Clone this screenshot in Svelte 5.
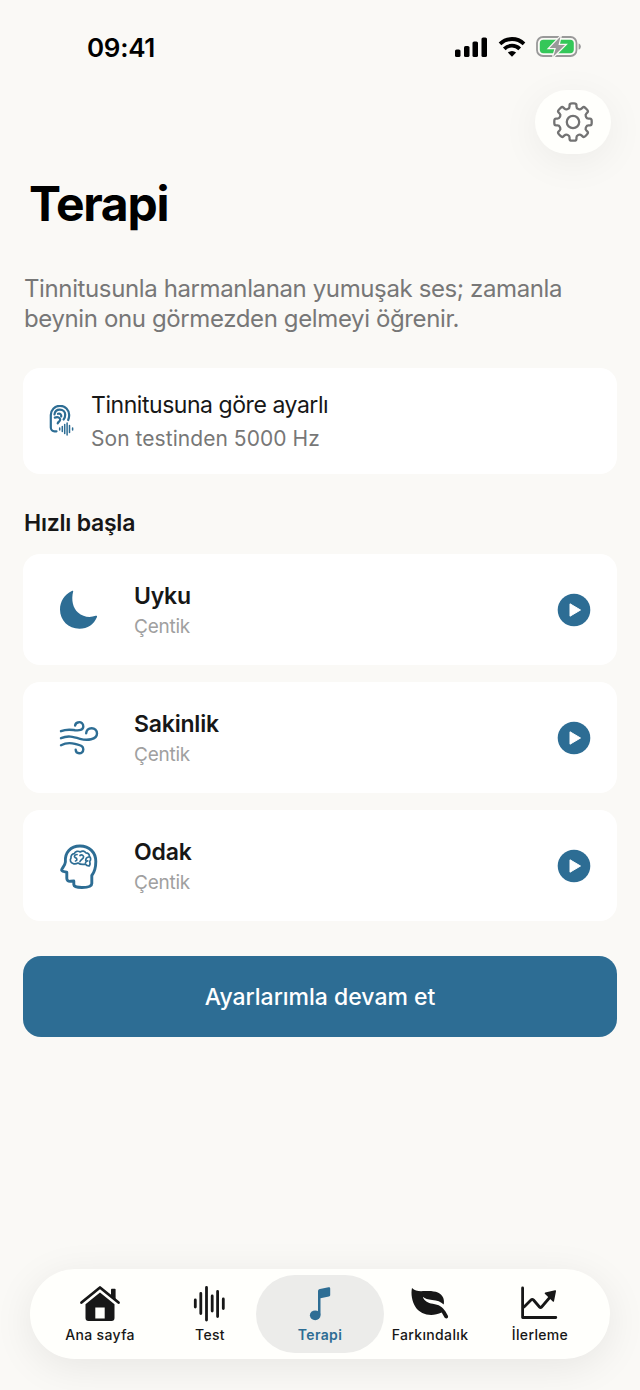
<script>
    const presets = [
        { id: 'sleep', title: 'Uyku', mode: 'Çentik' },
        { id: 'calm', title: 'Sakinlik', mode: 'Çentik' },
        { id: 'focus', title: 'Odak', mode: 'Çentik' }
    ];

    const tabs = [
        { id: 'home', label: 'Ana sayfa' },
        { id: 'test', label: 'Test' },
        { id: 'therapy', label: 'Terapi' },
        { id: 'mindfulness', label: 'Farkındalık' },
        { id: 'progress', label: 'İlerleme' }
    ];

    let activeTab = 'therapy';
    let playing = null;

    // Outline of the settings gear: eight teeth with softened corners
    function gearPath(cx, cy, outer, inner) {
        const points = [];
        for (let i = 0; i < 8; i++) {
            const mid = (i * Math.PI) / 4 - Math.PI / 2;
            for (const [r, a] of [[inner, -0.25], [outer, -0.18], [outer, 0.18], [inner, 0.25]]) {
                points.push([cx + r * Math.cos(mid + a), cy + r * Math.sin(mid + a)]);
            }
        }
        const between = (p, q, t) => [p[0] + (q[0] - p[0]) * t, p[1] + (q[1] - p[1]) * t];
        const text = (p) => `${p[0].toFixed(2)} ${p[1].toFixed(2)}`;
        return points
            .map((p, i) => {
                const prev = points[(i + points.length - 1) % points.length];
                const next = points[(i + 1) % points.length];
                const start = between(p, prev, 0.35);
                const end = between(p, next, 0.35);
                return `${i === 0 ? 'M' : 'L'}${text(start)}Q${text(p)} ${text(end)}`;
            })
            .join('') + 'Z';
    }
</script>

<div class="screen">
    <div class="status-bar">
        <span class="time">09:41</span>
        <div class="indicators">
            <svg width="34" height="22" viewBox="0 0 34 22">
                <rect x="1" y="13.5" width="5.5" height="7.5" rx="1.6" />
                <rect x="10" y="10" width="5.5" height="11" rx="1.6" />
                <rect x="18.5" y="5.5" width="5.5" height="15.5" rx="1.6" />
                <rect x="27.5" y="1.5" width="5.5" height="19.5" rx="1.6" />
            </svg>
            <svg class="wifi" width="28" height="22" viewBox="0 0 28 22">
                <path d="M2 7.8a17.4 17.4 0 0 1 24 0" />
                <path d="M6.3 12.8a11 11 0 0 1 15.4 0" />
                <path class="dot" d="M9.9 16.6a6 6 0 0 1 8.200 0L14 20.800Z" />
            </svg>
            <svg class="battery" width="46" height="24" viewBox="0 0 46 24">
                <rect class="shell" x="1" y="2" width="39.5" height="19" rx="6" />
                <rect class="level" x="3.8" y="4.8" width="34" height="13.4" rx="3.6" />
                <path class="cap" d="M42.600 8.400c3 1 3 5.200 0 6.200Z" />
                <path class="bolt" d="M24.500 1.500 13.500 13h6.400l-2.700 8.800L29 10h-6.500Z" />
            </svg>
        </div>
    </div>

    <div class="toolbar">
        <button class="settings-button" aria-label="Ayarlar">
            <svg width="44" height="44" viewBox="0 0 44 44">
                <path d={gearPath(22, 22, 19, 14.2)} />
                <circle cx="22" cy="22" r="6.2" />
            </svg>
        </button>
    </div>

    <main>
        <h1>Terapi</h1>
        <p class="intro">Tinnitusunla harmanlanan yumuşak ses; zamanla<br />beynin onu görmezden gelmeyi öğrenir.</p>

        <section class="card tuned">
            <svg width="28" height="32" viewBox="0 0 28 32">
                <path d="M8.500 26.300H6.500a3.700 3.700 0 0 1-3.700-3.700V10a9.200 9.200 0 0 1 18.400 0c0 2-.3 3.300-1 5" />
                <path d="M6.500 9.500c.3-3 2.500-4.800 5.300-4.800 3.200 0 5.400 2.200 5.400 5.100 0 1.900-.6 3.500-1.600 4.700" />
                <path d="M10 8.800c2.300-.6 3.600.8 3.200 2.700M6.800 12.600c3-.9 5.400-.2 5.400 1.900 0 2-1.900 2.100-2.500 3.900" />
                <path class="wave" d="M11.700 23v2M14.300 21.500v5M16.700 19.500v9M19.100 18v12M21.500 20.500v7M24.600 23v2" />
            </svg>
            <div>
                <div class="tuned-title">Tinnitusuna göre ayarlı</div>
                <div class="tuned-detail">Son testinden 5000 Hz</div>
            </div>
        </section>

        <h2>Hızlı başla</h2>

        <div class="presets">
            {#each presets as preset (preset.id)}
                <div class="card preset">
                    <div class="preset-icon">
                        {#if preset.id === 'sleep'}
                            <svg width="44" height="48" viewBox="0 0 44 48">
                                <path class="solid" d="M17.200 5.300C15 14.500 17 22 22 26.500c5 4.600 12 5.500 17.600 3.300 1.100-.3 1.700.3 1.400 1.100C38 38.200 31.500 42.700 23.500 42.700 12.300 42.700 4 34.300 4 23.500 4 15.300 8.500 8.500 15.800 5c1-.5 1.700-.4 1.400.3Z" />
                            </svg>
                        {:else if preset.id === 'calm'}
                            <svg width="44" height="48" viewBox="0 0 44 48">
                                <path d="M5 17.200c6-2.500 10-1.500 14-1 4 .4 8 .2 8.300-3.600.1-2.900-2.200-4.700-4.600-4.400-2 .2-3.300 1.500-3.600 3.300" />
                                <path d="M5 24.200c7-3 12-1.500 19 .6 7 2 17 1 17-5.300 0-3.300-2.400-5.300-5.300-5.300-3.500 0-5.400 2.300-5.500 5" />
                                <path d="M5 31.200c5-2.600 9.500-2.600 14-1.300 5 1.400 8.300 1.700 8.300 5.300 0 2.700-2 4.300-4.200 4.100-1.900-.1-3.300-1.500-3.400-3.600" />
                            </svg>
                        {:else}
                            <svg width="44" height="48" viewBox="0 0 44 48">
                                <path class="head" d="M35.800 33.500v8c0 2.800-4.800 4-9.800 4s-8-1-8.200-3V39l-3.300.3c-2.500.2-3.700-.8-3.700-3v-6.100c-2.500-.3-4.900-.9-5.200-2-.3-1.200 3.600-4.700 3.800-8.200C8.600 10.500 14.500 4 24 4s15.800 6.500 15.800 15.500c0 6-1.200 10.500-4 14Z" />
                                <path class="brain" d="M17 21.500c-2.600-.8-3.400-3.500-2-5.500-.4-2.500 1.100-4.300 3.300-4.400 1-2.400 4-3 5.900-1.600 2-1.500 4.600-1 5.600.8 2.300 0 3.800 1.700 3.600 3.700 1.500 1.300 1.700 3.500.3 4.900.6 1.500.4 3-.3 4.500-1.700.2-3-.4-3.800-1.700-3.200.6-5.700.2-7.500-1.200-1.900 1-3.700 1.200-5.100.5Z" />
                                <path class="brain" d="M21 12.500c-2.500 0-3.300 2-1.800 3.200 1.700.3 2.600 2.600.3 3.300M24 13.500c2-1.500 4.300.4 3.300 2.300-.7 1.400-2.500 2-3.300 3.700M32.500 15c-2 .4-2.700 1.700-2.800 3.200M29.500 20.800c.2-1.200 1-1.900 2.200-2" />
                            </svg>
                        {/if}
                    </div>
                    <div class="preset-text">
                        <div class="preset-title">{preset.title}</div>
                        <div class="preset-mode">{preset.mode}</div>
                    </div>
                    <button class="play-button" aria-label="Oynat" on:click={() => (playing = preset.id)}>
                        <svg width="34" height="34" viewBox="0 0 34 34">
                            <circle cx="17" cy="17" r="16.3" />
                            <path d="M13 10.800 23.500 17 13 23.200Z" />
                        </svg>
                    </button>
                </div>
            {/each}
        </div>

        <button class="continue-button">Ayarlarımla devam et</button>
    </main>

    <nav>
        {#each tabs as tab (tab.id)}
            <button class="tab" class:active={activeTab === tab.id} on:click={() => (activeTab = tab.id)}>
                <svg width="44" height="40" viewBox="0 0 44 40">
                    {#if tab.id === 'home'}
                        <path class="line" d="M3.500 19.500 22 4.500l18.500 15" />
                        <path d="M33 6.500q0-.8.800-.8h3q.8 0 .8.800v10L33 12.500Z" />
                        <path fill-rule="evenodd" d="M22 9.500 36.500 21.200V35a3 3 0 0 1-3 3h-23a3 3 0 0 1-3-3V21.200ZM17.300 24.500v11h9.400v-11Z" />
                    {:else if tab.id === 'test'}
                        <path class="line" d="M7.300 17v7M12.800 10.500v20M18.500 4.500v32.500M24.200 13v15M29.600 8.500v25M35.300 16v9.500" />
                    {:else if tab.id === 'therapy'}
                        <ellipse cx="17.200" cy="32.300" rx="5.300" ry="4.900" />
                        <path d="M20 31V8.500c0-1.500.7-2.200 2-2.500l8.500-1.700c1-.2 1.700.3 1.700 1.200V12c0 .8-.5 1.400-1.300 1.500l-8.400 1.700V32Z" />
                    {:else if tab.id === 'mindfulness'}
                        <path d="M4 5c3 3.500 8 3.300 13 3 9-.6 16 1 18.300 7 .8 2.200.8 4.300.4 6.600-3-3-6.500-4.100-11.500-4.600-4.200-.4-7.200-1.500-9.400-3.300 1.200 4 5 6.300 10 7 6 .8 9.800 3.200 12.700 7.800l2.400 4.300c1.100 2.500-2.300 3.700-3.500 1.500l-2.700-4.700C24 34 13 32.300 7.500 24 4 18.500 2.700 10.500 4 5Z" />
                    {:else}
                        <path class="line" d="M4.600 5v29.500h33.200M6 24l7-7c.9-.9 1.600-.9 2.500 0l6 7c.7.8 1.400.8 2.100 0L33 13" />
                        <path d="M26.800 10.800q-.5-.8.500-1.200L37 7.200q1.300-.2 1 1.100l-2 10q-.5 1-1.200.2Z" />
                    {/if}
                </svg>
                <span>{tab.label}</span>
            </button>
        {/each}
    </nav>
</div>

<style>
    :global(body) {
        background: #faf9f6;
    }

    .screen {
        --accent: #2d6d94;
        display: flex;
        flex-direction: column;
        box-sizing: border-box;
        height: 1390px;
        padding-bottom: 31px;
        overflow: hidden;
        background: #faf9f6;
        color: #171717;
        font-family: Inter, "Liberation Sans", sans-serif;
    }

    button {
        padding: 0;
        border: none;
        background: none;
        color: inherit;
        font: inherit;
        cursor: pointer;
    }

    svg {
        display: block;
        flex-shrink: 0;
    }

    .status-bar {
        display: flex;
        align-items: center;
        justify-content: space-between;
        height: 90px;
        box-sizing: border-box;
        padding: 4px 58px 0 87px;
    }

    .time {
        padding-top: 1px;
        font-size: 26px;
        font-weight: 600;
        letter-spacing: -0.3px;
        color: #000;
    }

    .indicators {
        display: flex;
        align-items: center;
        gap: 10px;
    }

    .wifi path {
        fill: none;
        stroke: #000;
        stroke-width: 3.8;
    }

    .wifi .dot {
        fill: #000;
        stroke: none;
    }

    .battery .shell {
        fill: none;
        stroke: #999;
        stroke-width: 1.8;
    }

    .battery .level {
        fill: #34c759;
    }

    .battery .cap {
        fill: #999;
    }

    .battery .bolt {
        fill: #999;
        stroke: #faf9f6;
        stroke-width: 2.4;
        paint-order: stroke;
    }

    .toolbar {
        display: flex;
        justify-content: flex-end;
        padding-right: 29px;
    }

    .settings-button {
        display: flex;
        align-items: center;
        justify-content: center;
        width: 76px;
        height: 64px;
        border-radius: 32px;
        background: #fffffc;
        box-shadow: 0 8px 40px rgba(0, 0, 0, 0.06);
    }

    .settings-button svg {
        fill: none;
        stroke: #737373;
        stroke-width: 2.3;
        stroke-linejoin: round;
    }

    main {
        display: flex;
        flex-direction: column;
        padding: 0 23px;
    }

    h1 {
        margin: 20px 0 0 6px;
        font-size: 48px;
        line-height: 60px;
        font-weight: 700;
        letter-spacing: -1.3px;
        color: #000;
    }

    .intro {
        margin: 40px 0 0 1px;
        font-size: 24px;
        line-height: 29.5px;
        letter-spacing: -0.38px;
        color: #777;
        white-space: nowrap;
    }

    .card {
        display: flex;
        align-items: center;
        box-sizing: border-box;
        border-radius: 17px;
        background: #fff;
    }

    .tuned {
        gap: 15px;
        height: 106px;
        margin-top: 35px;
        padding-left: 25px;
    }

    .tuned svg {
        fill: none;
        stroke: var(--accent);
        stroke-width: 2.2;
        stroke-linecap: round;
    }

    .tuned .wave {
        stroke-width: 1.5;
    }

    .tuned-title {
        padding-top: 1px;
        font-size: 23px;
        line-height: 33px;
        letter-spacing: -0.45px;
    }

    .tuned-detail {
        font-size: 21px;
        line-height: 33px;
        letter-spacing: 0.05px;
        color: #777;
    }

    h2 {
        margin: 34px 0 0 1px;
        font-size: 23px;
        line-height: 30px;
        font-weight: 600;
        letter-spacing: -0.23px;
    }

    .presets {
        display: flex;
        flex-direction: column;
        gap: 17px;
        margin-top: 16px;
    }

    .preset {
        height: 111px;
        padding: 0 26px 0 33px;
    }

    .preset-icon {
        width: 78px;
    }

    .preset-icon svg {
        fill: none;
        stroke: var(--accent);
        stroke-width: 2.4;
        stroke-linecap: round;
        stroke-linejoin: round;
    }

    .preset-icon .solid {
        fill: var(--accent);
        stroke: none;
    }

    .preset-icon .head {
        stroke-width: 2.9;
    }

    .preset-icon .brain {
        stroke-width: 1.7;
    }

    .preset-text {
        flex: 1;
        padding-top: 3px;
    }

    .preset-title {
        font-size: 23px;
        line-height: 31px;
        font-weight: 600;
        letter-spacing: -0.2px;
    }

    .preset-mode {
        font-size: 19px;
        line-height: 30px;
        letter-spacing: -0.25px;
        color: #a0a0a0;
    }

    .play-button circle {
        fill: var(--accent);
    }

    .play-button path {
        fill: #fff;
        stroke: #fff;
        stroke-linejoin: round;
    }

    .continue-button {
        height: 81px;
        margin-top: 35px;
        border-radius: 18px;
        background: var(--accent);
        color: #fff;
        font-size: 23px;
        font-weight: 500;
    }

    nav {
        display: flex;
        box-sizing: border-box;
        height: 90px;
        margin: auto 30px 0;
        padding: 6px;
        border-radius: 45px;
        background: #fffffc;
        box-shadow: 0 8px 40px rgba(0, 0, 0, 0.08);
    }

    .tab {
        display: flex;
        flex-direction: column;
        align-items: center;
        width: 128px;
        margin-right: -18px;
        padding-top: 8px;
        border-radius: 39px;
        font-size: 14px;
        font-weight: 500;
        letter-spacing: 0.35px;
    }

    .tab span {
        padding-top: 1px;
        line-height: 22px;
    }

    .tab svg {
        fill: currentColor;
    }

    .tab .line {
        fill: none;
        stroke: currentColor;
        stroke-width: 2.8;
        stroke-linecap: round;
        stroke-linejoin: round;
    }

    .tab.active {
        background: #ececea;
        color: var(--accent);
        font-weight: 600;
    }
</style>
